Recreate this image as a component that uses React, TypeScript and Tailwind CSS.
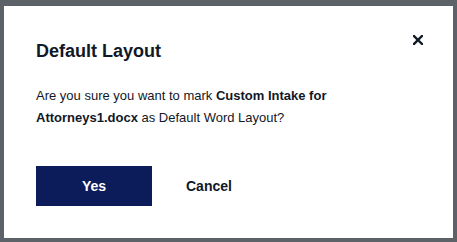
export default function App() {
  return (
    <div className="w-[457px] h-[242px] bg-[#5d6269] pt-[6px] px-[4px] pb-[4px] font-['Liberation_Sans',Arial,sans-serif]">
      <div className="h-full bg-white pt-[31px] pl-[32px] pr-[30px]">
        <div className="flex items-start justify-between">
          <h2 className="text-[18px] leading-[28px] font-bold text-[#111827]">Default Layout</h2>
          <button className="mt-[-2px] w-[10px] h-[10px] flex items-center justify-center text-[#111827]" aria-label="Close">
            <svg width="10" height="10" viewBox="0 0 10 10" fill="none">
              <path d="M1 1L9 9M9 1L1 9" stroke="currentColor" strokeWidth="2.4" strokeLinecap="square" />
            </svg>
          </button>
        </div>
        <p className="mt-[20px] text-[13px] leading-[22px] text-[#111827] w-[300px]">
          Are you sure you want to mark <span className="font-bold">Custom Intake for Attorneys1.docx</span> as Default Word Layout?
        </p>
        <div className="mt-[37px] flex items-center">
          <button className="w-[116px] h-[40px] bg-[#0c1b5a] text-white text-[14px] font-bold">Yes</button>
          <button className="ml-[34px] text-[14px] font-bold text-[#111827]">Cancel</button>
        </div>
      </div>
    </div>
  );
}
